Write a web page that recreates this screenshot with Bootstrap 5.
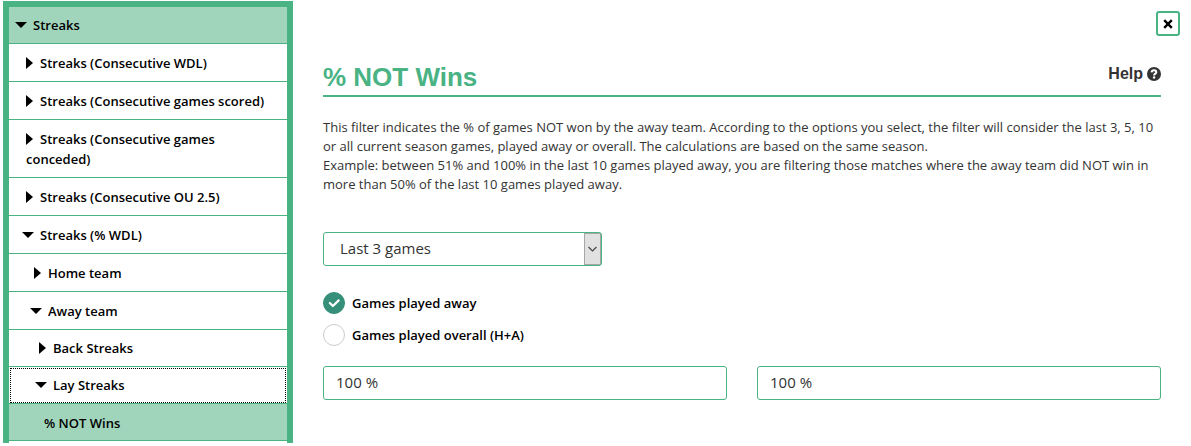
<!DOCTYPE html>
<html lang="en">
<head>
<meta charset="utf-8">
<meta name="viewport" content="width=device-width, initial-scale=1">
<title>% NOT Wins</title>
<link href="https://cdn.jsdelivr.net/npm/bootstrap@5.3.0/dist/css/bootstrap.min.css" rel="stylesheet">
<style>
  :root { --brand: #49b384; --brand-soft: #a0d5bc; --check: #358f79; --ink: #333; }
  body { font-family: "Open Sans", sans-serif; font-size: 13px; line-height: 19px; color: var(--ink); }

  .filter-tree { width: 290px; border: 6px solid var(--brand); border-bottom: 0; margin: 1px 0 0 3px; padding-bottom: 2px; }
  .tree-item { display: block; width: 100%; border: 0; border-bottom: 1px solid var(--brand); background: #fff; color: #000;
    font-weight: 600; line-height: 20px; text-align: left; text-decoration: none; padding: 9px 8px 8px 17px; }
  .tree-item.level-top { padding: 8px 8px 8px 10px; }
  .tree-item.level-3 { padding-left: 25px; }
  .tree-item.level-4 { padding: 8px 8px 8px 30px; }
  .tree-item.level-5 { padding: 9px 8px 7px 35px; }
  .tree-item.current { background: var(--brand-soft); }
  .tree-item.focused { outline: 1px dotted #000; outline-offset: -2px; }
  .caret { display: inline-block; width: 0; height: 0; margin-right: 7px; vertical-align: -1px;
    border: solid transparent; border-width: 6px 0 6px 7px; border-left-color: #000; }
  .caret.open { margin: 0 6px 0 -4px; vertical-align: 2px; border-width: 6px 6px 0; border-color: #000 transparent transparent; }

  .filter-panel { min-width: 0; padding: 61px 30px 0; }
  .panel-head { border-bottom: 2px solid var(--brand); height: 36px; }
  .panel-title, .help-link { font-family: "Liberation Sans", sans-serif; font-weight: 700; }
  .panel-title { color: var(--brand); font-size: 26px; line-height: 32px; }
  .help-link { font-size: 16px; line-height: 26px; color: var(--ink); }
  .close-btn { top: 11px; right: 11px; width: 24px; height: 25px; border: 2px solid var(--brand); border-radius: 3px; background: #fff; }
  .filter-text { margin: 21px 0 38px; }

  .filter-panel .form-select, .filter-panel .form-control { height: 34px; border: 1px solid var(--brand); border-radius: 3px;
    font-size: 15px; line-height: 20px; color: var(--ink); padding: 5px 12px 7px; }
  .filter-panel .form-select { width: 279px; padding: 5px 24px 7px 16px; background: #fff
    url("data:image/svg+xml,%3Csvg xmlns='http://www.w3.org/2000/svg' width='17' height='32'%3E%3Crect x='.5' y='.5' width='16' height='31' fill='%23e1e1e1' stroke='%23a6a6a6'/%3E%3Cpath d='M4.500 14l4 4 4-4' fill='none' stroke='%23444' stroke-width='1.2'/%3E%3C/svg%3E") no-repeat right 0 top 0 / 17px 32px; }
  .choice-list { padding: 26px 0 10px; }
  .choice { display: flex; align-items: center; gap: 7px; min-height: 22px; margin-bottom: 10px; }
  .choice .form-check-input { flex: none; width: 22px; height: 22px; margin: 0; border-color: #ccc; }
  .choice .form-check-input:checked { border-color: var(--check); background-color: var(--check);
    background-image: url("data:image/svg+xml,%3Csvg xmlns='http://www.w3.org/2000/svg' viewBox='0 0 22 22'%3E%3Cpath d='M6.8 11l3.1 3 5.8-5.600' fill='none' stroke='%23fff' stroke-width='2.2' stroke-linecap='round' stroke-linejoin='round'/%3E%3C/svg%3E"); background-size: 22px; }
  .choice label { font-weight: 600; color: #000; }
  .range-row { --bs-gutter-x: 30px; }
</style>
</head>
<body>
<div class="d-flex align-items-start position-relative">
  <nav class="filter-tree flex-shrink-0" aria-label="Filters">
    <button type="button" class="tree-item level-top current" aria-expanded="true"><span class="caret open"></span>Streaks</button>
    <button type="button" class="tree-item"><span class="caret"></span>Streaks (Consecutive WDL)</button>
    <button type="button" class="tree-item"><span class="caret"></span>Streaks (Consecutive games scored)</button>
    <button type="button" class="tree-item"><span class="caret"></span>Streaks (Consecutive games conceded)</button>
    <button type="button" class="tree-item"><span class="caret"></span>Streaks (Consecutive OU 2.5)</button>
    <button type="button" class="tree-item" aria-expanded="true"><span class="caret open"></span>Streaks (% WDL)</button>
    <button type="button" class="tree-item level-3"><span class="caret"></span>Home team</button>
    <button type="button" class="tree-item level-3" aria-expanded="true"><span class="caret open"></span>Away team</button>
    <button type="button" class="tree-item level-4"><span class="caret"></span>Back Streaks</button>
    <button type="button" class="tree-item level-4 focused" aria-expanded="true"><span class="caret open"></span>Lay Streaks</button>
    <a href="#" class="tree-item level-5 current" aria-current="page">% NOT Wins</a>
  </nav>

  <main class="filter-panel flex-grow-1">
    <button type="button" class="close-btn position-absolute d-flex align-items-center justify-content-center p-0" aria-label="Close">
      <svg width="10" height="10" viewBox="0 0 10 10" aria-hidden="true"><path d="M1.2 1.2l7.6 7.6M8.8 1.2L1.2 8.8" stroke="#000" stroke-width="2.4"/></svg>
    </button>

    <div class="panel-head d-flex justify-content-between align-items-start">
      <h1 class="panel-title m-0">% NOT Wins</h1>
      <a href="#" class="help-link d-flex align-items-center gap-1 text-decoration-none">Help
        <svg width="14" height="14" viewBox="0 0 14 14" aria-hidden="true"><circle cx="7" cy="7" r="7" fill="#333"/><path d="M4.600 5.300C4.800 3.900 5.800 3.300 7 3.300c1.300 0 2.300.8 2.300 1.900C9.300 6.700 7.100 6.600 7.100 8.400" fill="none" stroke="#fff" stroke-width="2"/><circle cx="7.100" cy="10.500" r="1.200" fill="#fff"/></svg>
      </a>
    </div>

    <p class="filter-text">This filter indicates the % of games NOT won by the away team. According to the options you select, the filter will consider the last 3, 5, 10 or all current season games, played away or overall. The calculations are based on the same season.<br>
      Example: between 51% and 100% in the last 10 games played away, you are filtering those matches where the away team did NOT win in more than 50% of the last 10 games played away.</p>

    <form>
      <select class="form-select" aria-label="Number of games"><option>Last 3 games</option></select>

      <div class="choice-list">
        <div class="choice form-check p-0">
          <input class="form-check-input float-none" type="radio" name="scope" id="scopeAway" checked>
          <label for="scopeAway">Games played away</label>
        </div>
        <div class="choice form-check p-0">
          <input class="form-check-input float-none" type="radio" name="scope" id="scopeOverall">
          <label for="scopeOverall">Games played overall (H+A)</label>
        </div>
      </div>

      <div class="row range-row">
        <div class="col"><input class="form-control" type="text" value="100 %" aria-label="From"></div>
        <div class="col"><input class="form-control" type="text" value="100 %" aria-label="To"></div>
      </div>
    </form>
  </main>
</div>
<script src="https://cdn.jsdelivr.net/npm/bootstrap@5.3.0/dist/js/bootstrap.bundle.min.js"></script>
</body>
</html>
